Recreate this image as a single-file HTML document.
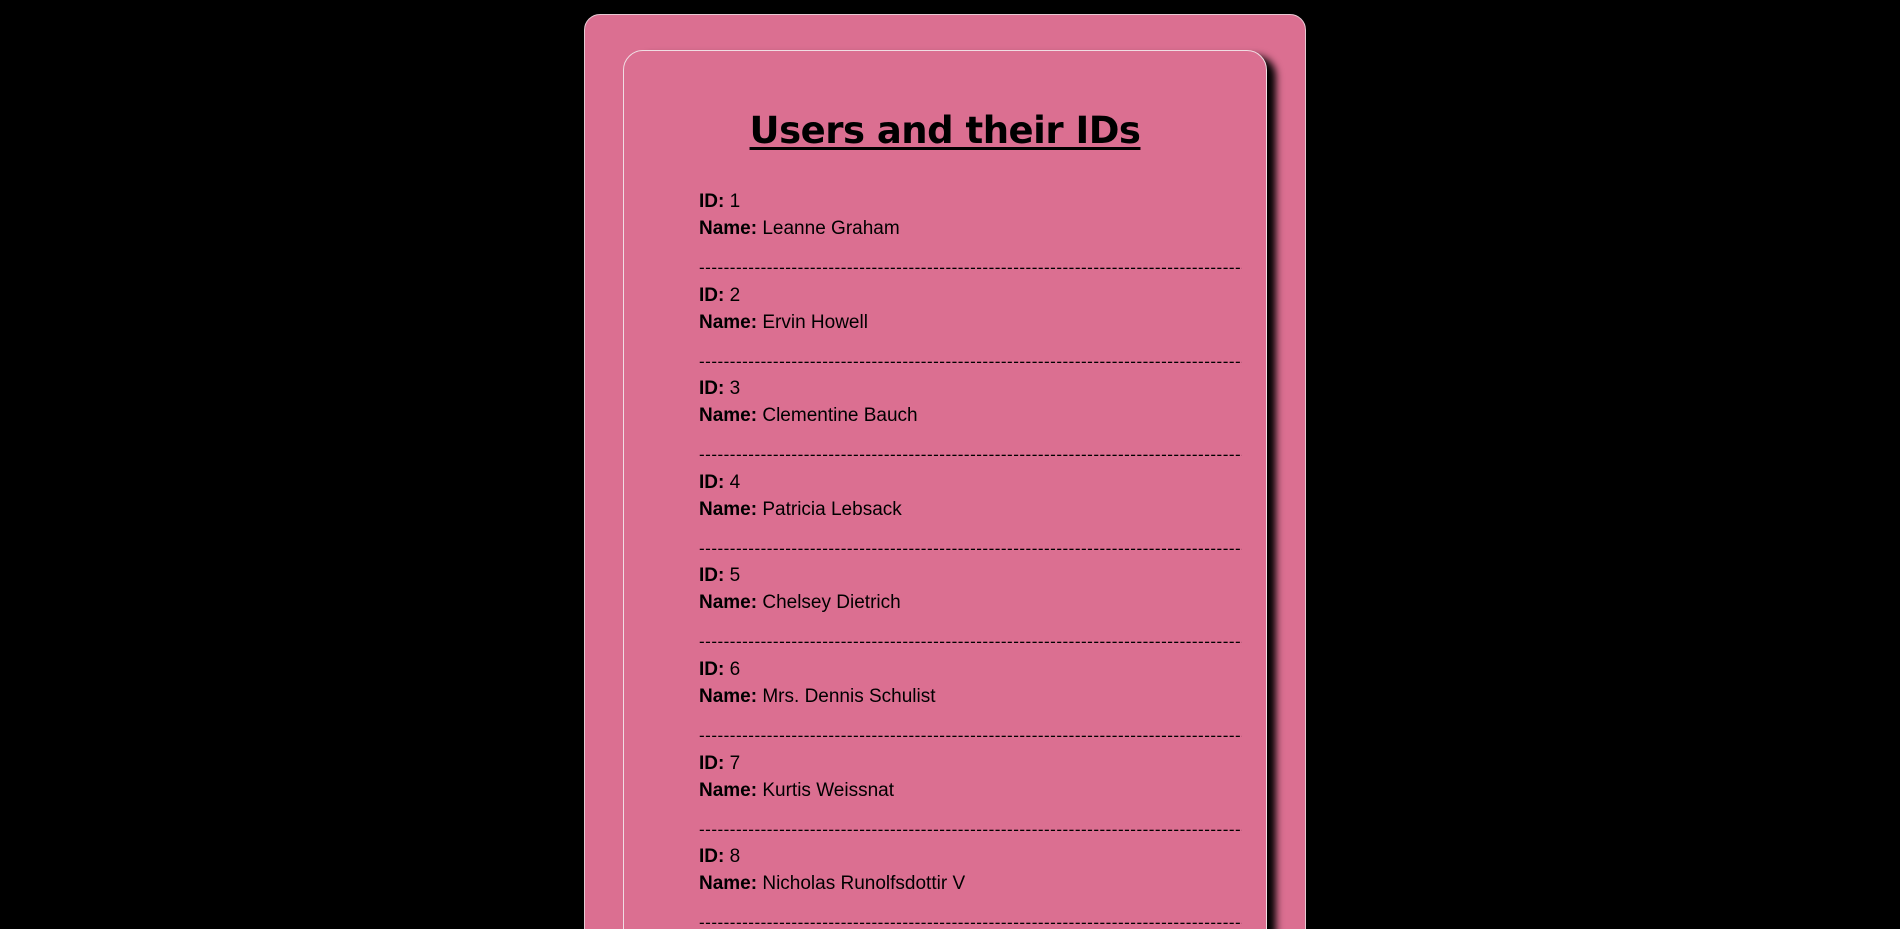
<!DOCTYPE html>
<html><head><meta charset="utf-8"><style>
html,body{margin:0;padding:0;background:#000;width:1900px;height:929px;overflow:hidden}
.wrap{position:relative;width:1900px;height:929px;overflow:hidden}
.outer{position:absolute;left:584px;top:14px;width:720px;height:930px;background:#db6f91;border:1px solid #e8c8d2;border-radius:16px;overflow:hidden}
.inner{position:absolute;left:38px;top:35px;width:642px;height:930px;background:#db6f91;border:1px solid #f0dde3;border-radius:20px;box-shadow:9px 6px 8px #000}
h1{position:absolute;left:0;right:0;top:56px;margin:0;text-align:center;font-family:"Comic Sans MS","DejaVu Sans",sans-serif;font-weight:bold;font-size:37px;line-height:48px;text-decoration:underline;text-decoration-thickness:3px;text-underline-offset:4px;color:#000;letter-spacing:-0.5px}
.list{position:absolute;left:75px;top:137px;width:543px;font-family:"Liberation Sans",sans-serif;font-size:19px;color:#000}
.l{line-height:27px;height:27px;white-space:nowrap}
.n{margin-bottom:12px}
.d{line-height:27.6px;height:27.6px;overflow:hidden;white-space:nowrap;letter-spacing:0.5px;font-size:17px}
</style></head><body><div class="wrap">
<div class="outer"><div class="inner">
<h1>Users and their IDs</h1>
<div class="list">
<div class="l"><b>ID:</b> 1</div><div class="l n"><b>Name:</b> Leanne Graham</div><div class="d">------------------------------------------------------------------------------------------------------</div>
<div class="l"><b>ID:</b> 2</div><div class="l n"><b>Name:</b> Ervin Howell</div><div class="d">------------------------------------------------------------------------------------------------------</div>
<div class="l"><b>ID:</b> 3</div><div class="l n"><b>Name:</b> Clementine Bauch</div><div class="d">------------------------------------------------------------------------------------------------------</div>
<div class="l"><b>ID:</b> 4</div><div class="l n"><b>Name:</b> Patricia Lebsack</div><div class="d">------------------------------------------------------------------------------------------------------</div>
<div class="l"><b>ID:</b> 5</div><div class="l n"><b>Name:</b> Chelsey Dietrich</div><div class="d">------------------------------------------------------------------------------------------------------</div>
<div class="l"><b>ID:</b> 6</div><div class="l n"><b>Name:</b> Mrs. Dennis Schulist</div><div class="d">------------------------------------------------------------------------------------------------------</div>
<div class="l"><b>ID:</b> 7</div><div class="l n"><b>Name:</b> Kurtis Weissnat</div><div class="d">------------------------------------------------------------------------------------------------------</div>
<div class="l"><b>ID:</b> 8</div><div class="l n"><b>Name:</b> Nicholas Runolfsdottir V</div><div class="d">------------------------------------------------------------------------------------------------------</div>
</div>
</div></div>
</div></body></html>
